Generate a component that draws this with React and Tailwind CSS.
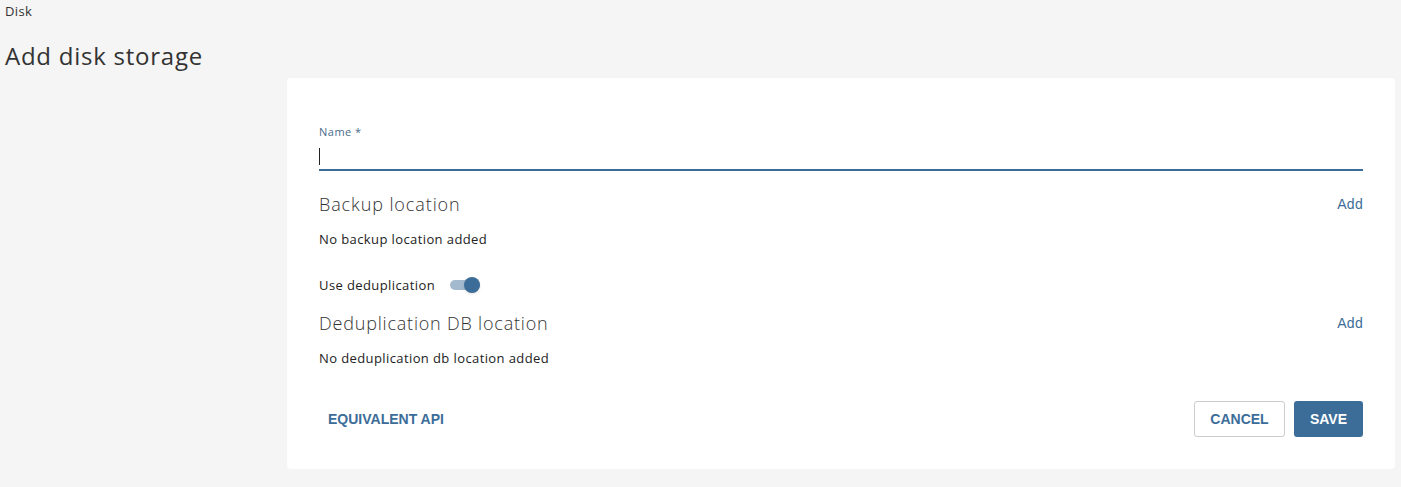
import React, { useState } from 'react';

function Toggle({ on, onChange }) {
  return (
    <button
      onClick={() => onChange(!on)}
      className="relative ml-[15px] h-[20px] w-[34px]"
      aria-label="Use deduplication"
    >
      <span className={`absolute left-0 top-[5px] h-[10px] w-[30px] rounded-full ${on ? 'bg-[#a3b9cd]' : 'bg-[#c8c8c8]'}`} />
      <span className={`absolute top-[2px] h-[16px] w-[16px] rounded-full shadow-sm ${on ? 'left-[14px] bg-[#3c6d98]' : 'left-0 bg-white'}`} />
    </button>
  );
}

export default function App() {
  const [name, setName] = useState('');
  const [dedup, setDedup] = useState(true);

  return (
    <div className="min-h-screen bg-[#f5f5f5] font-['Open_Sans',sans-serif] text-[#333]">
      <div className="px-[5px] pt-[3px] text-[13px] leading-[16px] tracking-[0.4px]">Disk</div>
      <h1 className="px-[5px] pt-[22px] text-[24px] leading-[30px] tracking-[0.75px]">Add disk storage</h1>

      <div className="flex pt-[7px] pr-[6px]">
        <div className="w-[287px] shrink-0" />
        <div className="flex-1 rounded-[4px] bg-white px-[32px] pt-[47px] pb-[32px]">
          {/* Name field */}
          <label className="block text-[11px] leading-[14px] tracking-[0.5px] text-[#4a6b8c]">Name *</label>
          <div className="relative">
            <input
              value={name}
              onChange={(e) => setName(e.target.value)}
              className="mt-[6px] block h-[26px] w-full border-b-2 border-[#3c6d98] bg-transparent text-[14px] outline-none"
            />
            {name === '' && <span className="absolute left-0 top-[3px] h-[17px] w-px bg-[#222]" />}
          </div>

          {/* Backup location */}
          <div className="mt-[22px] flex items-center justify-between">
            <h2 className="text-[18px] font-light leading-[22px] tracking-[0.9px] text-[#333]">Backup location</h2>
            <button className="font-['Liberation_Sans',sans-serif] text-[14px] tracking-[0.3px] text-[#3c6d98]">Add</button>
          </div>
          <p className="mt-[16px] text-[13px] leading-[16px] tracking-[0.4px] text-[#222]">No backup location added</p>

          <div className="mt-[28px] flex items-center">
            <span className="text-[13px] leading-[16px] tracking-[0.4px] text-[#222]">Use deduplication</span>
            <Toggle on={dedup} onChange={setDedup} />
          </div>

          {/* Deduplication DB location */}
          <div className="mt-[17px] flex items-center justify-between">
            <h2 className="text-[18px] font-light leading-[22px] tracking-[0.8px] text-[#333]">Deduplication DB location</h2>
            <button className="font-['Liberation_Sans',sans-serif] text-[14px] tracking-[0.3px] text-[#3c6d98]">Add</button>
          </div>
          <p className="mt-[16px] text-[13px] leading-[16px] tracking-[0.4px] text-[#222]">No deduplication db location added</p>

          <div className="mt-[35px] flex items-center justify-between">
            <button className="px-[9px] font-['Liberation_Sans',sans-serif] text-[14px] font-bold text-[#3c6d98]">
              EQUIVALENT API
            </button>
            <div className="flex gap-[9px]">
              <button className="h-[36px] w-[91px] rounded-[3px] border border-[#ccc] font-['Liberation_Sans',sans-serif] text-[14px] font-bold text-[#3c6d98]">
                CANCEL
              </button>
              <button className="h-[36px] w-[69px] rounded-[3px] bg-[#3c6d98] font-['Liberation_Sans',sans-serif] text-[14px] font-bold text-white">
                SAVE
              </button>
            </div>
          </div>
        </div>
      </div>
    </div>
  );
}
